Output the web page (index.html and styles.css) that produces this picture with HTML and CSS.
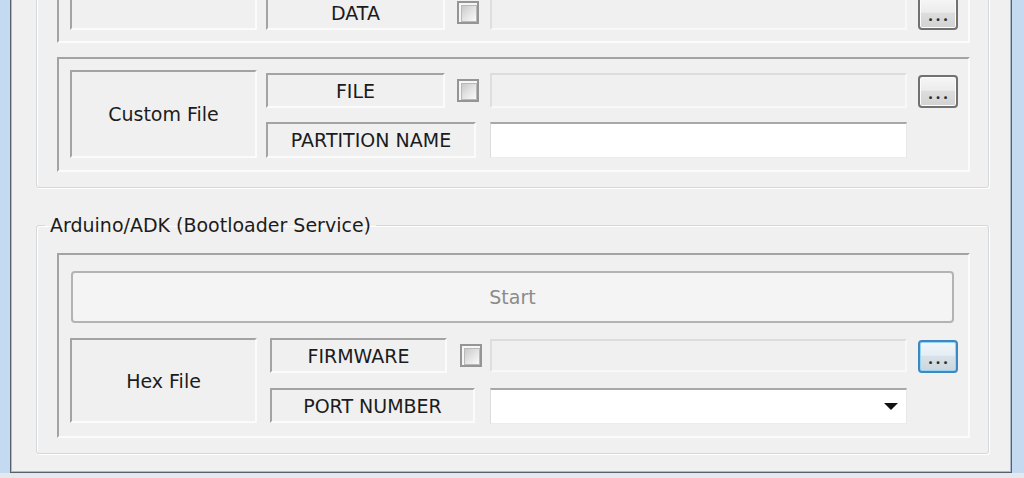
FILE: index.html
```html
<!DOCTYPE html>
<html lang="en">
<head>
<meta charset="utf-8">
<title>Flash Tool</title>
<link rel="stylesheet" href="styles.css">
</head>
<body>
<div class="window">
  <div class="client">
    <div class="group group-top">
      <div class="panel panel-data">
        <div class="entry entry-data">
          <div class="cell side side-data"></div>
          <div class="rows">
            <div class="row">
              <div class="cell name">DATA</div>
              <span class="check-slot"><span class="check"></span></span>
              <div class="field field-off"></div>
              <button class="browse">...</button>
            </div>
          </div>
        </div>
      </div>
      <div class="panel panel-custom">
        <div class="entry entry-custom">
          <div class="cell side">Custom File</div>
          <div class="rows">
            <div class="row">
              <div class="cell name">FILE</div>
              <span class="check-slot"><span class="check"></span></span>
              <div class="field field-off"></div>
              <button class="browse">...</button>
            </div>
            <div class="row row-2">
              <div class="cell name-wide">PARTITION NAME</div>
              <div class="field field-on"></div>
            </div>
          </div>
        </div>
      </div>
    </div>

    <fieldset class="group group-ard">
      <legend>Arduino/ADK (Bootloader Service)</legend>
      <div class="panel panel-ard">
        <button class="start" disabled>Start</button>
        <div class="entry entry-hex">
          <div class="cell side side-hex">Hex File</div>
          <div class="rows">
            <div class="row">
              <div class="cell name">FIRMWARE</div>
              <span class="check-slot"><span class="check"></span></span>
              <div class="field field-off"></div>
              <button class="browse browse-focus">...</button>
            </div>
            <div class="row row-2">
              <div class="cell name-wide">PORT NUMBER</div>
              <div class="field field-on combo">
                <svg class="arrow" width="14" height="8" viewBox="0 0 14 8"><polygon points="0,0 14,0 7,7" fill="#111"/></svg>
              </div>
            </div>
          </div>
        </div>
      </div>
    </fieldset>
  </div>
</div>
</body>
</html>
```

FILE: styles.css
```css
* { box-sizing: border-box; }

html, body { margin: 0; padding: 0; }

body {
  width: 1024px;
  height: 478px;
  overflow: hidden;
  background: #e6e8eb;
  font-family: "DejaVu Sans", "Open Sans", sans-serif;
  font-size: 19px;
  color: #1c1c1c;
}

.window {
  height: 473px;
  display: flex;
  border-left: 10px solid #c3daf1;
  border-right: 12px solid #c3daf1;
}

.client {
  flex: 1;
  background: #f0f0f0;
  border: 1px solid #56616d;
  border-top: 0;
  box-shadow: inset 1px 0 0 #aeb9c4, inset -1px 0 0 #aeb9c4, inset 0 -1px 0 #aeb9c4;
  overflow: hidden;
  padding: 0 22px 0 25px;
}

/* group boxes */
.group {
  border: 1px solid #d3d8dc;
  border-radius: 3px;
  box-shadow: inset 1px 1px 0 #fff, 1px 1px 0 #fff;
}

.group-top {
  margin-top: -40px;
  padding: 0 18px 15px 20px;
}

.group-ard {
  margin: 25px 0 0 0;
  padding: 16px 18px 15px 20px;
  min-inline-size: 0;
}

.group-ard legend {
  margin-left: -12px;
  padding: 0 5px;
  line-height: 24px;
  height: 24px;
}

/* sunken panels */
.panel {
  border: 2px solid;
  border-color: #a3a3a3 #fbfbfb #fbfbfb #a3a3a3;
  padding: 11px 9px 12px 11px;
}

.panel-data {
  padding-top: 32px;
  padding-bottom: 11px;
}

.panel-custom { margin-top: 14px; }

.panel-ard {
  padding-top: 16px;
  padding-bottom: 12px;
}

/* label cells */
.cell {
  display: flex;
  align-items: center;
  justify-content: center;
  border: 2px solid;
  border-color: #a3a3a3 #fbfbfb #fbfbfb #a3a3a3;
  white-space: nowrap;
}

.entry { display: flex; }

.side {
  width: 187px;
  height: 88px;
  margin-right: 9px;
}

.side-data { height: 35px; }

.side-hex {
  height: 85px;
  margin-right: 13px;
}

.rows {
  display: flex;
  flex-direction: column;
}

.entry-custom .rows {
  padding-top: 3px;
  gap: 14px;
}

.entry-hex .rows { gap: 15px; }

.row {
  display: flex;
  align-items: center;
  height: 35px;
}

.row-2 { height: 36px; }

.name { width: 179px; height: 35px; }
.entry-hex .name { width: 177px; }

.name-wide {
  width: 210px;
  height: 36px;
  margin-right: 14px;
}
.entry-hex .name-wide {
  width: 205px;
  height: 35px;
  align-self: flex-start;
  margin-right: 15px;
}

/* checkbox */
.check-slot {
  width: 45px;
  display: flex;
  padding-left: 12px;
}
.entry-hex .check-slot { width: 43px; padding-left: 13px; }

.check {
  width: 22px;
  height: 23px;
  border: 2px solid #959595;
  background: #f6f6f6;
  padding: 2px;
}
.check::after {
  content: "";
  display: block;
  width: 100%;
  height: 100%;
  border: 1px solid #b9b9b9;
  background: linear-gradient(135deg, #c9c9c9 0%, #e6e6e6 55%, #fafafa 100%);
}

/* text fields */
.field {
  width: 417px;
  height: 35px;
}

.field-off {
  background: #f0f0f0;
  border: 2px solid;
  border-color: #dcdcdc #f8f8f8 #f8f8f8 #dedede;
}
.entry-hex .field-off { height: 33px; }

.field-on {
  height: 36px;
  background: #fff;
  border: 1px solid;
  border-color: #e2e2e2 #e8e8e8 #ececec #dcdcdc;
  border-top: 2px solid #a8a8a8;
}

.combo {
  display: flex;
  align-items: center;
  justify-content: flex-end;
  padding-right: 8px;
}

/* browse button */
.browse {
  align-self: flex-end;
  margin-left: 11px;
  width: 40px;
  height: 33px;
  border: 2px solid #717171;
  border-radius: 4px;
  background: linear-gradient(#f6f6f6 0%, #ececec 45%, #dddddd 50%, #d2d2d2 100%);
  box-shadow: inset 0 0 0 1px #fcfcfc;
  display: flex;
  align-items: flex-end;
  justify-content: center;
  padding: 0 0 5px 3px;
  font-family: "Open Sans", sans-serif;
  font-weight: 700;
  font-size: 16px;
  line-height: 16px;
  letter-spacing: 3px;
  color: #2b2b2b;
}

.browse-focus {
  border-color: #3d88c0;
  box-shadow: inset 0 0 0 1px #9bd3f2;
  background: linear-gradient(#f1f7fb 0%, #e5eef4 45%, #d7e1e8 50%, #ccd6dd 100%);
}

/* start button */
.start {
  display: block;
  width: 883px;
  height: 52px;
  margin: 0 0 15px 1px;
  border: 2px solid #b3b3b3;
  border-radius: 4px;
  background: #f4f4f4;
  font-family: "DejaVu Sans", sans-serif;
  font-size: 19px;
  color: #8b8b8b;
}
```
